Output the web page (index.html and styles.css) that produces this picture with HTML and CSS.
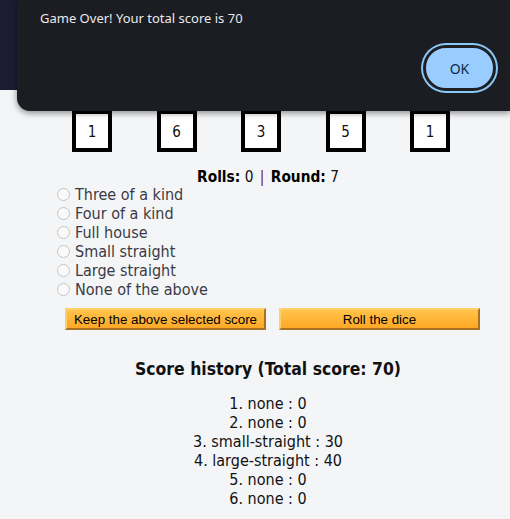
FILE: index.html
```html
<!DOCTYPE html>
<html>
<head>
<meta charset="utf-8">
<link rel="stylesheet" href="styles.css">
</head>
<body>
<div class="topbar"></div>
<main class="game">
  <div class="dice">
    <div class="die">1</div>
    <div class="die">6</div>
    <div class="die">3</div>
    <div class="die">5</div>
    <div class="die">1</div>
  </div>
  <p class="status"><b>Rolls:</b> 0 <span class="sep">|</span> <b>Round:</b> 7</p>
  <ul class="options">
    <li><label><input type="radio" name="s"> Three of a kind</label></li>
    <li><label><input type="radio" name="s"> Four of a kind</label></li>
    <li><label><input type="radio" name="s"> Full house</label></li>
    <li><label><input type="radio" name="s"> Small straight</label></li>
    <li><label><input type="radio" name="s"> Large straight</label></li>
    <li><label><input type="radio" name="s"> None of the above</label></li>
  </ul>
  <div class="actions">
    <button class="btn">Keep the above selected score</button>
    <button class="btn">Roll the dice</button>
  </div>
  <h2 class="history-title">Score history (Total score: 70)</h2>
  <ol class="history">
    <li>1. none : 0</li>
    <li>2. none : 0</li>
    <li>3. small-straight : 30</li>
    <li>4. large-straight : 40</li>
    <li>5. none : 0</li>
    <li>6. none : 0</li>
  </ol>
</main>
<div class="dialog">
  <div class="dialog-msg">Game Over! Your total score is 70</div>
  <div class="dialog-actions"><button class="ok">OK</button></div>
</div>
</body>
</html>
```

FILE: styles.css
```css
html, body {
  margin: 0;
  padding: 0;
}
body {
  background: #f4f5f7;
  font-family: "DejaVu Sans Condensed", "DejaVu Sans", sans-serif;
  font-size: 16px;
  color: #222;
  position: relative;
  height: 519px;
  overflow: hidden;
}
.topbar {
  height: 90px;
  background: #1c1b34;
}
.game {
  padding-left: 26px;
  width: 484px;
}
.dice {
  display: flex;
  gap: 44.5px;
  margin: 20px 0 0 46px;
}
.die {
  width: 32px;
  height: 32px;
  border: 4px solid #000;
  background: #fff;
  display: flex;
  align-items: center;
  justify-content: center;
  font-size: 15px;
  color: #111;
  padding-top: 2px;
  box-sizing: content-box;
}
.status {
  margin: 16px 0 0;
  text-align: center;
  line-height: 19px;
  font-size: 15.3px;
  color: #111;
}
.status b {
  color: #000;
}
.sep {
  color: #7a1c22;
  margin: 0 2px;
}
.options {
  list-style: none;
  margin: -2px 0 0;
  padding: 0 0 0 31px;
}
.options li {
  line-height: 19px;
  height: 19px;
  color: #3a3a44;
}
.options label {
  display: flex;
  align-items: center;
  gap: 5px;
}
.options input {
  appearance: none;
  -webkit-appearance: none;
  width: 13px;
  height: 13px;
  margin: 0;
  border: 1px solid #c4c4c4;
  border-radius: 50%;
  background: #fafafa;
  box-sizing: border-box;
}
.actions {
  display: flex;
  gap: 13px;
  margin: 9px 0 0 39px;
}
.btn {
  width: 201px;
  height: 22px;
  padding: 0;
  font-family: "Liberation Sans", Arial, sans-serif;
  font-size: 13.33px;
  color: #000;
  background: linear-gradient(#ffc44a, #ffa726);
  border: 2px solid;
  border-color: #ffcf6b #a8721f #a8721f #ffcf6b;
}
.history-title {
  margin: 27px 0 0;
  text-align: center;
  font-size: 17.4px;
  line-height: 24px;
  color: #111;
}
.history {
  list-style: none;
  margin: 13px 0 0;
  padding: 0;
  text-align: center;
  line-height: 19px;
  color: #111;
}
.dialog {
  position: absolute;
  top: 0;
  left: 17px;
  right: 0;
  height: 111px;
  background: #1b1d22;
  border-bottom-left-radius: 13px;
  box-shadow: 0 2px 6px rgba(0, 0, 0, 0.45);
  display: flex;
  flex-direction: column;
  font-family: "Noto Sans", sans-serif;
}
.dialog-msg {
  color: #e8eaed;
  font-size: 13px;
  line-height: 18px;
  padding: 9px 0 0 23px;
}
.dialog-actions {
  display: flex;
  justify-content: flex-end;
  padding: 18px 14px 0 0;
}
.ok {
  width: 73px;
  height: 46px;
  border-radius: 23px;
  background: #99ccff;
  border: 3px solid #1d1f23;
  box-shadow: 0 0 0 2px #8ac6f6;
  color: #0b2a47;
  font-family: "Noto Sans", sans-serif;
  font-size: 14px;
  padding: 0;
}
```
